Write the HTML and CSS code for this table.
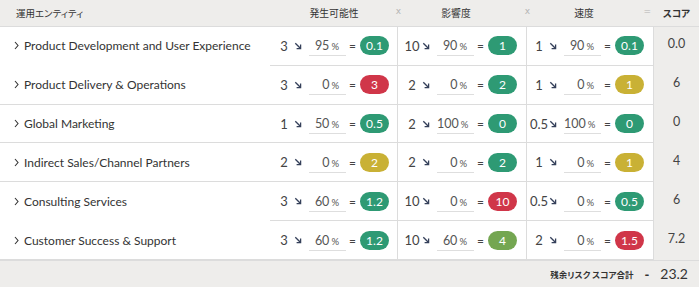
FILE: index.html
```html
<!DOCTYPE html>
<html lang="ja">
<head>
<meta charset="utf-8">
<title>Risk score</title>
<link rel="stylesheet" href="styles.css">
</head>
<body>
<div class="table">
  <div class="row head">
    <div class="cell name-h">運用エンティティ</div>
    <div class="cell mh mh-l"><span class="ht">発生可能性</span><span class="op op-x1">x</span></div>
    <div class="cell mh mh-i"><span class="ht">影響度</span><span class="op op-x2">x</span></div>
    <div class="cell mh mh-v"><span class="ht">速度</span><span class="op op-eq">=</span></div>
    <div class="cell score-h">スコア</div>
  </div>

  <div class="row">
    <div class="cell name no-line"><svg class="chev" viewBox="0 0 5 9"><path d="M1 1 L4 4.5 L1 8"/></svg><span>Product Development and User Experience</span></div>
    <div class="cell m"><span class="num">3</span><svg class="arr" viewBox="0 0 8 8"><path d="M1.3 1.3 L6.3 6.3 M2.6 6.6 H6.6 V2.6"/></svg><span class="inp">95<small>%</small></span><span class="eq">=</span><span class="pill g">0.1</span></div>
    <div class="cell m"><span class="num">10</span><svg class="arr" viewBox="0 0 8 8"><path d="M1.3 1.3 L6.3 6.3 M2.6 6.6 H6.6 V2.6"/></svg><span class="inp">90<small>%</small></span><span class="eq">=</span><span class="pill g">1</span></div>
    <div class="cell m mv"><span class="num">1</span><svg class="arr" viewBox="0 0 8 8"><path d="M1.3 1.3 L6.3 6.3 M2.6 6.6 H6.6 V2.6"/></svg><span class="inp">90<small>%</small></span><span class="eq">=</span><span class="pill g">0.1</span></div>
    <div class="cell score">0.0</div>
  </div>

  <div class="row">
    <div class="cell name"><svg class="chev" viewBox="0 0 5 9"><path d="M1 1 L4 4.5 L1 8"/></svg><span>Product Delivery &amp; Operations</span></div>
    <div class="cell m"><span class="num">3</span><svg class="arr" viewBox="0 0 8 8"><path d="M1.3 1.3 L6.3 6.3 M2.6 6.6 H6.6 V2.6"/></svg><span class="inp">0<small>%</small></span><span class="eq">=</span><span class="pill r">3</span></div>
    <div class="cell m"><span class="num">2</span><svg class="arr" viewBox="0 0 8 8"><path d="M1.3 1.3 L6.3 6.3 M2.6 6.6 H6.6 V2.6"/></svg><span class="inp">0<small>%</small></span><span class="eq">=</span><span class="pill g">2</span></div>
    <div class="cell m mv"><span class="num">1</span><svg class="arr" viewBox="0 0 8 8"><path d="M1.3 1.3 L6.3 6.3 M2.6 6.6 H6.6 V2.6"/></svg><span class="inp">0<small>%</small></span><span class="eq">=</span><span class="pill y">1</span></div>
    <div class="cell score">6</div>
  </div>

  <div class="row">
    <div class="cell name"><svg class="chev" viewBox="0 0 5 9"><path d="M1 1 L4 4.5 L1 8"/></svg><span>Global Marketing</span></div>
    <div class="cell m"><span class="num">1</span><svg class="arr" viewBox="0 0 8 8"><path d="M1.3 1.3 L6.3 6.3 M2.6 6.6 H6.6 V2.6"/></svg><span class="inp">50<small>%</small></span><span class="eq">=</span><span class="pill g">0.5</span></div>
    <div class="cell m"><span class="num">2</span><svg class="arr" viewBox="0 0 8 8"><path d="M1.3 1.3 L6.3 6.3 M2.6 6.6 H6.6 V2.6"/></svg><span class="inp">100<small>%</small></span><span class="eq">=</span><span class="pill g">0</span></div>
    <div class="cell m mv"><span class="num">0.5</span><svg class="arr" viewBox="0 0 8 8"><path d="M1.3 1.3 L6.3 6.3 M2.6 6.6 H6.6 V2.6"/></svg><span class="inp">100<small>%</small></span><span class="eq">=</span><span class="pill g">0</span></div>
    <div class="cell score">0</div>
  </div>

  <div class="row">
    <div class="cell name"><svg class="chev" viewBox="0 0 5 9"><path d="M1 1 L4 4.5 L1 8"/></svg><span>Indirect Sales/Channel Partners</span></div>
    <div class="cell m"><span class="num">2</span><svg class="arr" viewBox="0 0 8 8"><path d="M1.3 1.3 L6.3 6.3 M2.6 6.6 H6.6 V2.6"/></svg><span class="inp">0<small>%</small></span><span class="eq">=</span><span class="pill y">2</span></div>
    <div class="cell m"><span class="num">2</span><svg class="arr" viewBox="0 0 8 8"><path d="M1.3 1.3 L6.3 6.3 M2.6 6.6 H6.6 V2.6"/></svg><span class="inp">0<small>%</small></span><span class="eq">=</span><span class="pill g">2</span></div>
    <div class="cell m mv"><span class="num">1</span><svg class="arr" viewBox="0 0 8 8"><path d="M1.3 1.3 L6.3 6.3 M2.6 6.6 H6.6 V2.6"/></svg><span class="inp">0<small>%</small></span><span class="eq">=</span><span class="pill y">1</span></div>
    <div class="cell score">4</div>
  </div>

  <div class="row">
    <div class="cell name no-line"><svg class="chev" viewBox="0 0 5 9"><path d="M1 1 L4 4.5 L1 8"/></svg><span>Consulting Services</span></div>
    <div class="cell m"><span class="num">3</span><svg class="arr" viewBox="0 0 8 8"><path d="M1.3 1.3 L6.3 6.3 M2.6 6.6 H6.6 V2.6"/></svg><span class="inp">60<small>%</small></span><span class="eq">=</span><span class="pill g">1.2</span></div>
    <div class="cell m"><span class="num">10</span><svg class="arr" viewBox="0 0 8 8"><path d="M1.3 1.3 L6.3 6.3 M2.6 6.6 H6.6 V2.6"/></svg><span class="inp">0<small>%</small></span><span class="eq">=</span><span class="pill r">10</span></div>
    <div class="cell m mv"><span class="num">0.5</span><svg class="arr" viewBox="0 0 8 8"><path d="M1.3 1.3 L6.3 6.3 M2.6 6.6 H6.6 V2.6"/></svg><span class="inp">0<small>%</small></span><span class="eq">=</span><span class="pill g">0.5</span></div>
    <div class="cell score">6</div>
  </div>

  <div class="row">
    <div class="cell name"><svg class="chev" viewBox="0 0 5 9"><path d="M1 1 L4 4.5 L1 8"/></svg><span>Customer Success &amp; Support</span></div>
    <div class="cell m"><span class="num">3</span><svg class="arr" viewBox="0 0 8 8"><path d="M1.3 1.3 L6.3 6.3 M2.6 6.6 H6.6 V2.6"/></svg><span class="inp">60<small>%</small></span><span class="eq">=</span><span class="pill g">1.2</span></div>
    <div class="cell m"><span class="num">10</span><svg class="arr" viewBox="0 0 8 8"><path d="M1.3 1.3 L6.3 6.3 M2.6 6.6 H6.6 V2.6"/></svg><span class="inp">60<small>%</small></span><span class="eq">=</span><span class="pill lg">4</span></div>
    <div class="cell m mv"><span class="num">2</span><svg class="arr" viewBox="0 0 8 8"><path d="M1.3 1.3 L6.3 6.3 M2.6 6.6 H6.6 V2.6"/></svg><span class="inp">0<small>%</small></span><span class="eq">=</span><span class="pill r">1.5</span></div>
    <div class="cell score">7.2</div>
  </div>

  <div class="footer">
    <span class="total-label">残余リスク スコア合計</span>
    <span class="dash">-</span>
    <span class="total">23.2</span>
  </div>
</div>
</body>
</html>
```

FILE: styles.css
```css
* { box-sizing: border-box; }
html, body { margin: 0; padding: 0; background: #ffffff; }
body {
  font-family: Lato, "Noto Sans", "Noto Sans CJK JP", sans-serif;
  color: #333333;
  width: 699px;
  height: 287px;
  overflow: hidden;
}
.table { display: flex; flex-direction: column; width: 699px; height: 287px; }

.row {
  display: grid;
  grid-template-columns: 270px 128px 129px 127px 45px;
  height: 38.83px;
}
.row.head {
  height: 27px;
  background: #eeedeb;
  border-bottom: 1px solid #dcdcdc;
}

.cell { display: flex; align-items: center; min-width: 0; }

.name-h {
  padding-left: 16px;
  font-family: "Noto Sans CJK JP", sans-serif;
  font-size: 9.5px;
  font-feature-settings: "palt";
  color: #333;
}
.mh {
  position: relative;
  justify-content: center;
  font-family: "Noto Sans CJK JP", sans-serif;
  font-size: 9.8px;
  color: #333;
}
.mh-i, .mh-v { padding-right: 13px; }
.op {
  position: absolute;
  top: 6px;
  font-family: "DejaVu Sans", sans-serif;
  font-size: 9px;
  color: #b5b5b5;
}
.op-x1 { right: -3px; }
.op-x2 { right: -3px; }
.op-eq { right: 3px; }
.score-h {
  justify-content: center;
  font-family: "Noto Sans CJK JP", sans-serif;
  font-size: 9.5px;
  font-weight: 700;
  font-feature-settings: "palt";
  color: #333;
}

.name {
  padding-left: 14px;
  border-bottom: 1px solid #dcdcdc;
  font-size: 12px;
  color: #333;
  white-space: nowrap;
}
.name.no-line { border-bottom-color: transparent; }
.chev {
  width: 5px;
  height: 9px;
  margin-right: 5px;
  fill: none;
  stroke: #333;
  stroke-width: 1.1;
}

.m {
  padding-left: 5px;
  border-bottom: 1px solid #dcdcdc;
  border-right: 1px solid #dcdcdc;
  color: #444;
}
.mv { padding-left: 3px; }
.num {
  width: 18px;
  text-align: center;
  font-size: 13px;
  white-space: nowrap;
}
.arr {
  width: 8px;
  height: 8px;
  margin-left: 1px;
  fill: none;
  stroke: #35405a;
  stroke-width: 1.3;
}
.inp {
  display: inline-block;
  width: 37px;
  height: 20px;
  line-height: 20px;
  margin-left: 7px;
  margin-top: 1px;
  padding-right: 7px;
  text-align: right;
  border-bottom: 1px solid #dedede;
  font-size: 12.5px;
  color: #555;
}
.inp small { font-size: 9.5px; margin-left: 2px; }
.eq {
  margin-left: 3px;
  width: 8px;
  font-size: 12px;
  color: #444;
}
.pill {
  margin-left: 3px;
  width: 29px;
  height: 19px;
  border-radius: 10px;
  display: flex;
  align-items: center;
  justify-content: center;
  color: #ffffff;
  font-size: 12px;
}
.pill.g { background: #2e9a74; }
.pill.r { background: #d03649; }
.pill.y { background: #c9b135; }
.pill.lg { background: #74a651; }

.score {
  background: #eeedeb;
  justify-content: center;
  padding-bottom: 5px;
  font-size: 12.5px;
  color: #444;
}

.footer {
  flex: 1;
  background: #eeedeb;
  border-top: 1px solid #dcdcdc;
  display: flex;
  align-items: center;
  justify-content: flex-end;
  padding-right: 11px;
}
.total-label {
  font-family: "Noto Sans CJK JP", sans-serif;
  font-size: 8.5px;
  font-weight: 700;
  font-feature-settings: "palt";
  color: #333;
}
.dash {
  margin-left: 11px;
  font-size: 13px;
  font-weight: 900;
  color: #333;
}
.total {
  margin-left: 11px;
  font-size: 14px;
  color: #333;
}
```
